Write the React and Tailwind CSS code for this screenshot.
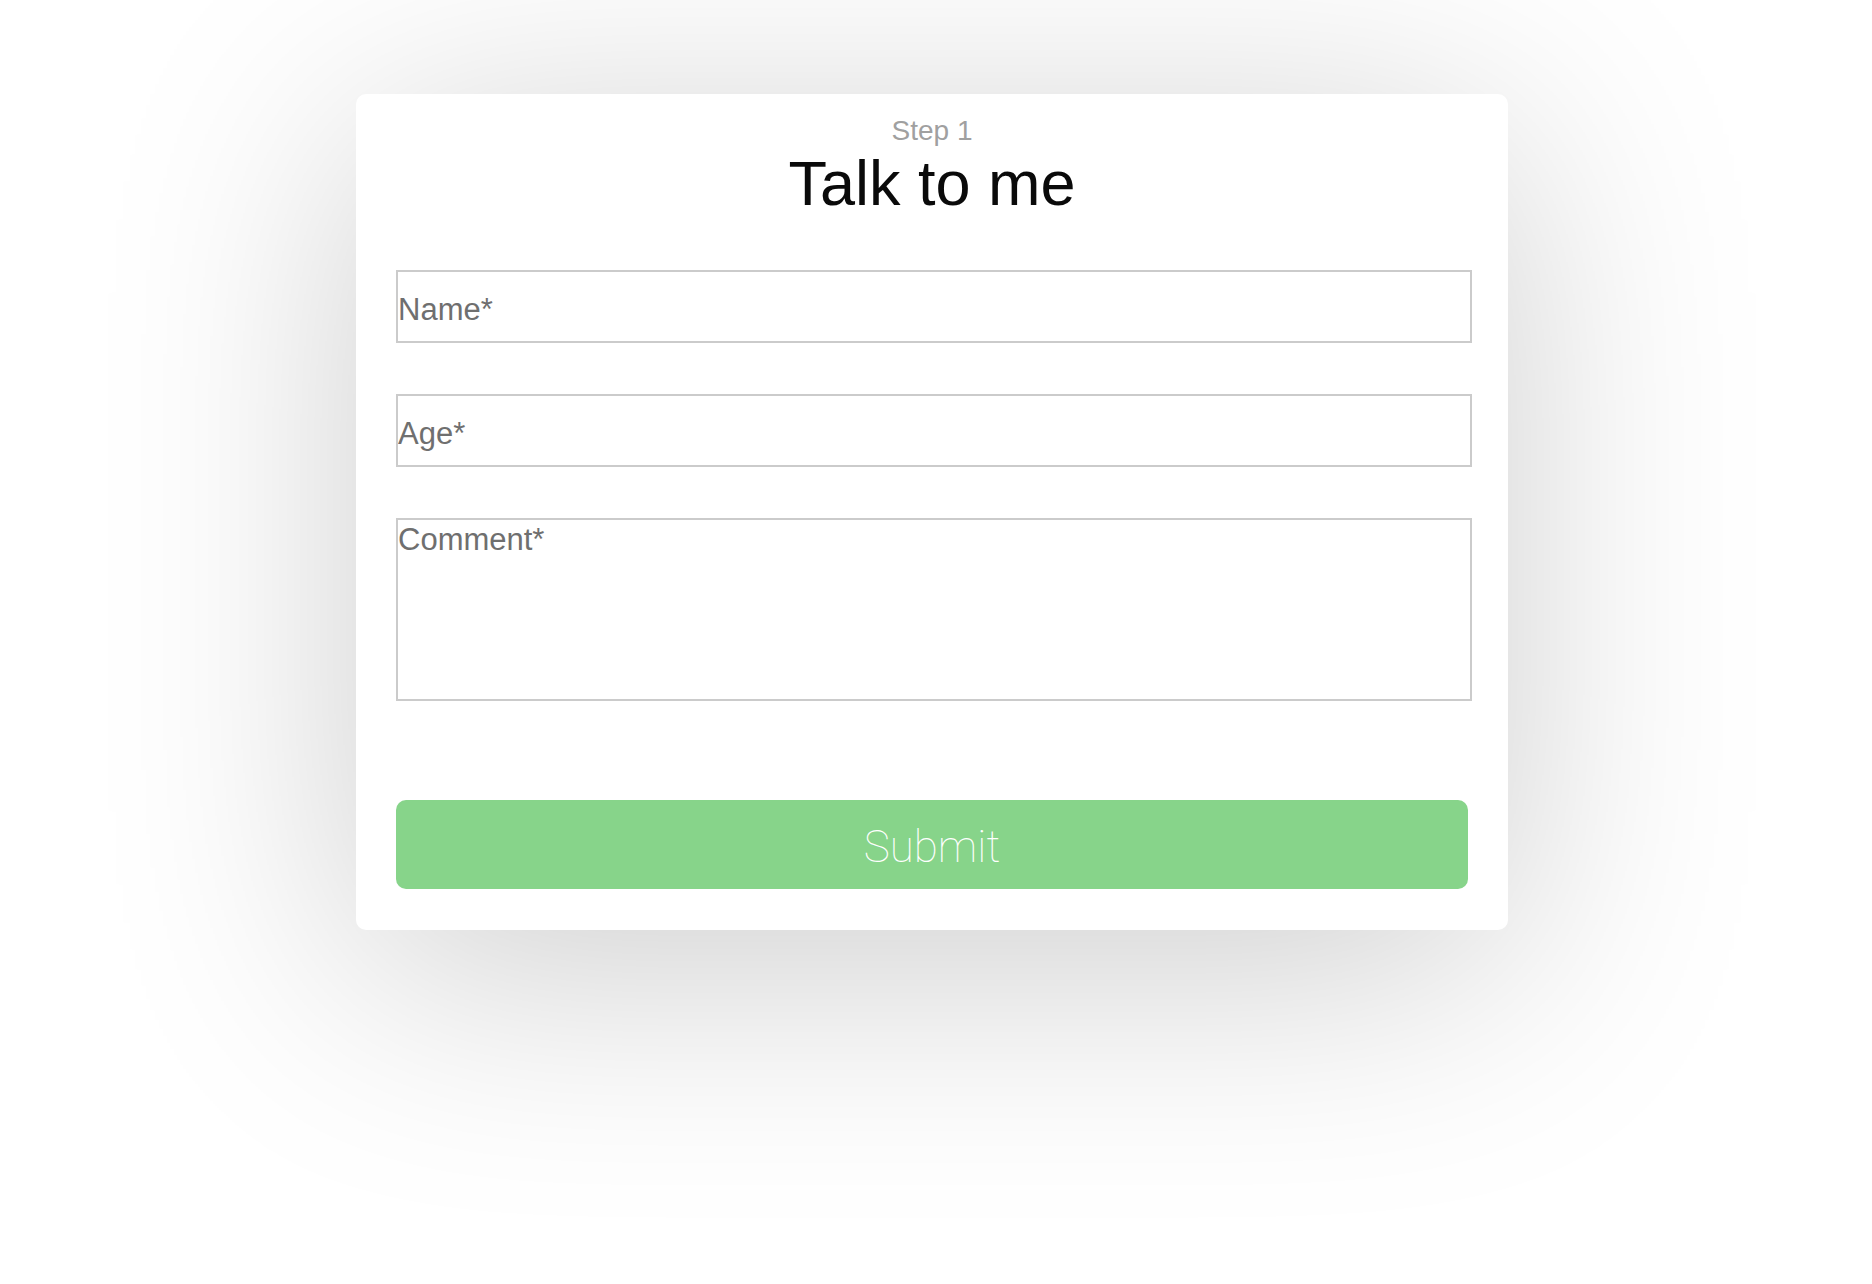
import React from "react";

const App = () => {
  return (
    <div className="min-h-screen bg-white pt-[94px] pr-2 font-['Liberation_Sans',Arial,sans-serif]">
      {/* Card */}
      <div className="mx-auto w-[1152px] rounded-[10px] bg-white pt-5 pb-[41px] shadow-[0_40px_300px_rgba(0,0,0,0.2)]">
        <div className="text-center">
          <div className="text-[28px] leading-[32px] pt-px text-[#a0a0a0]">Step 1</div>
          <h1 className="text-[63px] leading-[72px] font-normal text-[#0a0a0a]">
            Talk to me
          </h1>
        </div>

        {/* Form */}
        <form className="mt-[51px] px-10 flex flex-col" onSubmit={(e) => e.preventDefault()}>
          <input
            type="text"
            placeholder="Name*"
            className="w-[calc(100%+4px)] h-[73px] border-2 border-[#cbcbcb] pt-[6px] pl-0 text-[31px] text-[#555] placeholder:text-[#6f6f6f] outline-none"
          />
          <input
            type="text"
            placeholder="Age*"
            className="mt-[51px] w-[calc(100%+4px)] h-[73px] border-2 border-[#cbcbcb] pt-[6px] pl-0 text-[31px] text-[#555] placeholder:text-[#6f6f6f] outline-none"
          />
          <textarea
            placeholder="Comment*"
            className="mt-[51px] w-[calc(100%+4px)] h-[183px] resize-none border-2 border-[#cbcbcb] pt-px text-[31px] leading-[38px] text-[#555] placeholder:text-[#6f6f6f] outline-none"
          />
          <button
            type="submit"
            className="mt-[99px] h-[89px] w-full rounded-[10px] bg-[#87d48a] pt-1 text-[44px] font-thin text-white font-['Roboto',sans-serif]"
          >
            Submit
          </button>
        </form>
      </div>
    </div>
  );
};

export default App;
